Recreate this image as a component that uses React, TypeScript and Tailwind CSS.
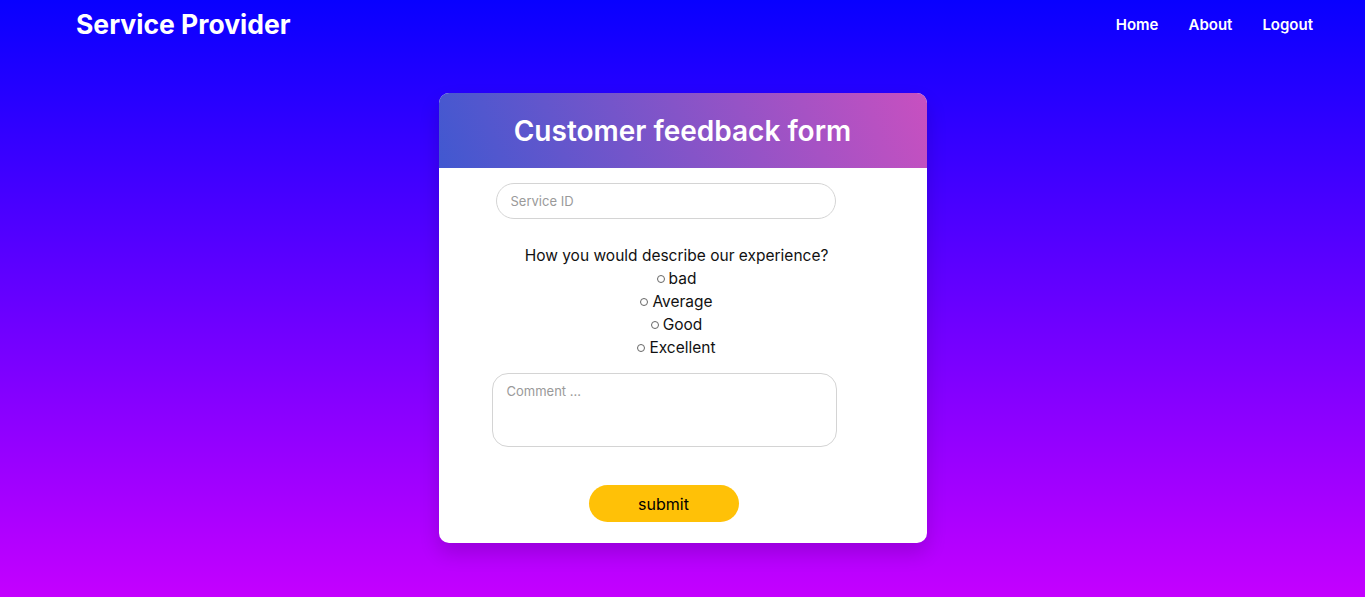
const options = ["bad", "Average", "Good", "Excellent"];

export default function App() {
  return (
    <div
      className="min-h-screen bg-[linear-gradient(to_bottom,#0800ff,#c400ff)]"
      style={{ fontFamily: "Inter, 'Open Sans', sans-serif" }}
    >
      {/* navbar */}
      <nav className="flex h-[48px] items-center justify-between pl-[76px] pr-[52px] pt-[2px]">
        <span className="text-[26.5px] font-bold text-white">Service Provider</span>
        <ul className="flex gap-[30px] text-[15px] font-semibold text-white">
          <li>Home</li>
          <li>About</li>
          <li>Logout</li>
        </ul>
      </nav>

      {/* card */}
      <div className="mx-auto mt-[45px] w-[488px] overflow-hidden rounded-[10px] bg-white shadow-[0_10px_20px_rgba(0,0,0,0.15)]">
        <div className="flex h-[75px] items-center justify-center bg-[linear-gradient(70deg,#4158d0,#c850c0)]">
          <h1 className="text-[28px] font-semibold text-white">Customer feedback form</h1>
        </div>

        <form className="flex flex-col pb-[21px] pt-[15px]">
          <input
            placeholder="Service ID"
            className="ml-[57px] h-[36px] w-[340px] rounded-full border border-[#d4d4d4] px-[14px] text-[13px] outline-none placeholder:text-[#9a9a9a]"
          />

          <div className="mt-[25px] pr-[12px] text-center text-[15.5px] leading-[23px] text-[#111]">
            <p>How you would describe our experience?</p>
            {options.map((o) => (
              <div key={o} className="flex items-center justify-center gap-[4px]">
                <span className="h-[8px] w-[8px] rounded-full border border-[#666]" />
                <span>{o}</span>
              </div>
            ))}
          </div>

          <textarea
            placeholder="Comment ..."
            className="ml-[53px] mt-[14px] h-[74px] w-[345px] resize-none rounded-[16px] border border-[#d4d4d4] px-[14px] py-[8px] text-[13px] outline-none placeholder:text-[#9a9a9a]"
          />

          <button
            type="button"
            className="ml-[150px] mt-[38px] h-[37px] w-[150px] rounded-full bg-[#ffc107] text-[16px] text-black"
          >
            submit
          </button>
        </form>
      </div>
    </div>
  );
}
